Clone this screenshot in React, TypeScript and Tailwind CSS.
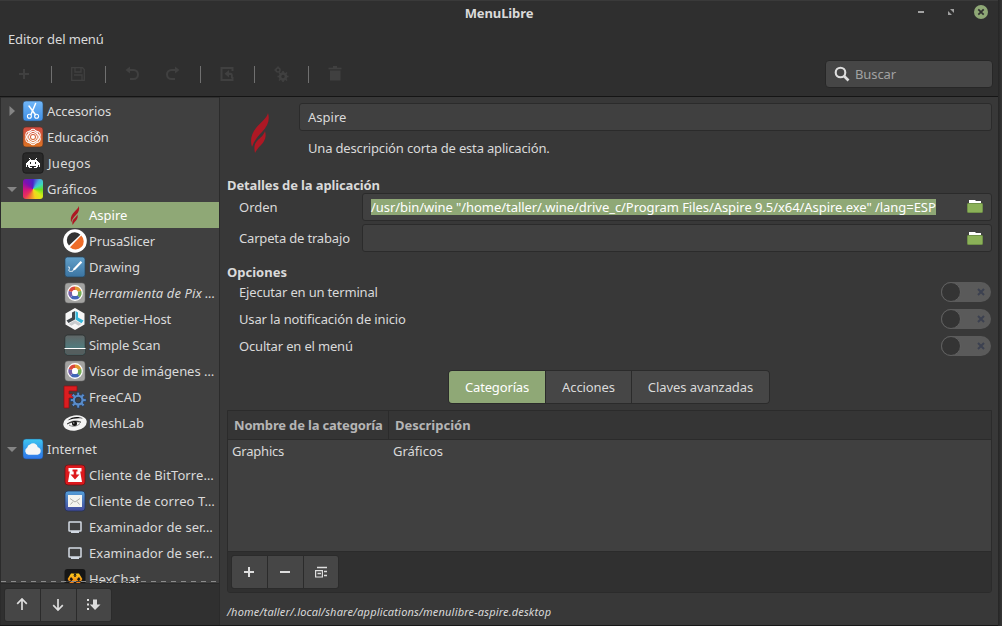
import type { ReactNode } from "react";

type IconName =
  | "scissors" | "atom" | "invader" | "spectrum" | "flame" | "prusa" | "drawing" | "pix"
  | "repetier" | "scan" | "freecad" | "meshlab" | "cloud" | "torrent" | "mail" | "server" | "hex";

const gearTeeth = [0, 45, 90, 135, 180, 225, 270, 315];

function Flame({ className }: { className: string }) {
  return (
    <svg className={className} viewBox="0 0 18 40">
      <path d="M17 0C16 5 11 8 5 15C0 21-1 28 1 34C3 28 7 23 11 19C17 13 19 7 17 0Z" fill="#ad1824" />
      <path d="M14 18C13 22 9 25 6 28C3 31 3 35 4 40C7 34 11 32 13 28C15 25 15 21 14 18Z" fill="#ad1824" />
    </svg>
  );
}

function Art({ name }: { name: IconName }) {
  switch (name) {
    case "scissors":
      return (
        <>
          <rect x="2" y="2" width="20" height="20" rx="3" fill="url(#blue)" stroke="#2d4a6a" strokeWidth=".6" />
          <path d="M14.6 4.5L10 15.5M8 7L14.5 15.8" stroke="#fff" strokeWidth="1.5" fill="none" strokeLinecap="round" />
          <circle cx="8.4" cy="17.3" r="2" fill="none" stroke="#fff" strokeWidth="1.1" />
          <circle cx="15.6" cy="17.3" r="2" fill="none" stroke="#fff" strokeWidth="1.1" />
        </>
      );
    case "atom":
      return (
        <>
          <rect x="2" y="2" width="20" height="20" rx="3" fill="url(#orange)" stroke="#5a3020" strokeWidth=".6" />
          <g fill="none" stroke="#fff" strokeWidth="1">
            <circle cx="12" cy="12" r="3.6" />
            <ellipse cx="12" cy="12" rx="7.8" ry="5.2" transform="rotate(30 12 12)" />
            <ellipse cx="12" cy="12" rx="7.8" ry="5.2" transform="rotate(90 12 12)" />
            <ellipse cx="12" cy="12" rx="7.8" ry="5.2" transform="rotate(150 12 12)" />
          </g>
          <circle cx="12" cy="12" r="2" fill="#fff" />
        </>
      );
    case "invader":
      return (
        <>
          <rect x="1.8" y="1.8" width="20.4" height="20.4" rx="3" fill="#292929" stroke="#181818" strokeWidth=".8" />
          <path d="M8 7h1v1h1v1h4V8h1V7h1v1h-1v1h1v1h1v1h1v1h1v4h-1v-2h-1v2h-1v1h-3v-1h2v-1H9v1h2v1H8v-1H7v-2H6v2H5v-4h1v-1h1v-1h1V9h1V8H8zM9 11v2h1v-2zM14 11v2h1v-2z" fill="#fff" fillRule="evenodd" />
        </>
      );
    case "spectrum":
      return (
        <foreignObject x="2" y="2" width="20" height="20">
          <div className="h-5 w-5 rounded-[3px] bg-[conic-gradient(#4a22c8,#4aa8e0_10%,#3ad8c0_17%,#6ae020_26%,#d8ea18_36%,#f5d020_46%,#f08030_55%,#e8305c_63%,#d01480_74%,#8010b0_86%,#4a22c8)]" />
        </foreignObject>
      );
    case "prusa":
      return (
        <>
          <circle cx="12" cy="12" r="11.8" fill="#fff" />
          <path d="M6 16.6A7.7 7.7 0 0 1 17.4 5.700Z" fill="#333" />
          <path d="M18.200 6.600A7.9 7.9 0 0 1 7 18.300Z" fill="#ee6c28" />
        </>
      );
    case "drawing":
      return (
        <>
          <rect x="2" y="2" width="20" height="20" rx="2.5" fill="url(#steel)" stroke="#27455c" strokeWidth=".7" />
          <path d="M10.500 13.500L17.600 6L19.200 7.600L12.300 14.800L9.500 16Z" fill="#fff" />
          <path d="M5 12.5C6.5 11 7 12.5 6 14.5S7.5 16.8 10 16" fill="none" stroke="#fff" strokeWidth=".9" />
        </>
      );
    case "pix":
      return (
        <>
          <rect x="2" y="2" width="20" height="20" rx="3" fill="#a3a3a1" stroke="#6e6e6e" strokeWidth=".5" />
          <circle cx="12" cy="12" r="7.9" fill="#fff" />
          <g fill="none" strokeWidth="3.6">
            <path d="M12 7.2A4.8 4.8 0 0 1 16.5 10.4" stroke="#e09a32" />
            <path d="M16.5 10.4A4.8 4.8 0 0 1 15.4 15.4" stroke="#74ad54" />
            <path d="M15.4 15.4A4.8 4.8 0 0 1 8.6 15.4" stroke="#4266b8" />
            <path d="M8.6 15.4A4.8 4.8 0 0 1 7.4 10.4" stroke="#7660a8" />
            <path d="M7.4 10.4A4.8 4.8 0 0 1 12 7.2" stroke="#d9483c" />
          </g>
          <circle cx="12" cy="12" r="3" fill="#fff" />
        </>
      );
    case "repetier":
      return (
        <>
          <path d="M12 1L21.500 6.500V17.500L12 23L2.500 17.500V6.500Z" fill="#f6f6f6" />
          <path d="M9 5.500L12 4V12.500L5.500 16L3.500 13.500L9 10.500Z" fill="#40464b" />
          <path d="M12.500 4L15 5.500V10.500L20.500 13.500L18.500 16.200L12.500 12.500Z" fill="#36b5d8" />
          <path d="M5.500 17L12 13.200L18.500 17L15.500 18.700L12 16.500L8.500 18.700Z" fill="#c9cccf" />
        </>
      );
    case "scan":
      return (
        <>
          <rect x="1.8" y="2" width="20.4" height="20" rx="2.8" fill="url(#scanner)" stroke="#2a3030" strokeWidth=".8" />
          <path d="M2.200 15.5H21.800V19A3 3 0 0 1 19 21.600H5A3 3 0 0 1 2.200 19Z" fill="#555e5e" />
          <path d="M1.5 15.5H22.5" stroke="#fff" strokeWidth="1" />
        </>
      );
    case "freecad":
      return (
        <>
          <path d="M1 1H14V6H6V9H11V13H6V23H1Z" fill="#db1d20" stroke="#8b1014" strokeWidth=".7" />
          <g fill="#5a8cca" stroke="#18355d" strokeWidth=".6">
            {gearTeeth.map((angle) => (
              <rect key={angle} x="13.9" y="7.2" width="2.6" height="4.5" transform={`rotate(${angle} 15.2 15.1)`} />
            ))}
          </g>
          <circle cx="15.2" cy="15.1" r="4.2" fill="none" stroke="#5a8cca" strokeWidth="2.4" />
          <circle cx="15.2" cy="15.1" r="2.9" fill="#404040" stroke="#18355d" strokeWidth=".6" />
        </>
      );
    case "meshlab":
      return (
        <>
          <ellipse cx="12" cy="12" rx="11.8" ry="7.6" fill="#f4f4f4" transform="rotate(-8 12 12)" />
          <path d="M4.500 9.500C9 5.500 15 5 20 7.500C14.500 6.600 10 7.500 4.500 9.500Z" fill="#111" />
          <path d="M4 13C9 9.300 13.500 9.200 18 11.200C13.500 10.500 9 10.800 4 13Z" fill="#111" stroke="#111" strokeWidth=".5" />
          <path d="M6 14C9.500 16.200 14 15.500 17 12.500" fill="none" stroke="#666" strokeWidth=".8" />
          <circle cx="11.500" cy="12.500" r="2.500" fill="#111" />
          <circle cx="10.800" cy="11.900" r=".6" fill="#fff" />
        </>
      );
    case "cloud":
      return (
        <>
          <rect x="2" y="2" width="20" height="20" rx="3" fill="url(#sky)" stroke="#225080" strokeWidth=".5" />
          <path d="M7.500 17.800A3.900 3.900 0 0 1 6.300 10.500A3.600 3.600 0 0 1 9 7.600A4.600 4.600 0 0 1 16.800 10.200A3.900 3.900 0 0 1 16.500 17.800Z" fill="#f5f5f5" />
        </>
      );
    case "torrent":
      return (
        <>
          <rect x="2" y="2" width="20" height="20" rx="3" fill="#dd191d" stroke="#6c1214" strokeWidth=".8" />
          <path d="M5.500 5H18.500V8.500H17.200L19 19H5L6.800 8.500H5.500Z" fill="#fff" />
          <path d="M9.500 6.500H14.500V8.500H13.300V11.500H16.500L12 16.500L7.500 11.500H10.700V8.500H9.500Z" fill="#dd191d" />
        </>
      );
    case "mail":
      return (
        <>
          <rect x="2" y="2" width="20" height="20" rx="3" fill="url(#post)" stroke="#233258" strokeWidth=".8" />
          <rect x="5" y="6" width="14" height="12" fill="#f4f4f0" />
          <path d="M7 9.500L12 13L17 9.500M7.500 15.500L10 12.500M16.500 15.500L14 12.500" fill="none" stroke="#b0b0ab" strokeWidth="1" />
        </>
      );
    case "server":
      return (
        <>
          <rect x="6" y="7" width="12" height="9" rx=".5" fill="none" stroke="#d3dae3" strokeWidth="1.500" />
          <path d="M8 17H16" stroke="#d3dae3" strokeWidth="2" />
        </>
      );
    case "hex":
      return (
        <>
          <rect x="1.5" y="2" width="21" height="20" rx="3" fill="#161616" />
          <path d="M8.500 7.500H15.500L18.300 12L15.500 17H8.500L5.700 12Z" fill="none" stroke="url(#honey)" strokeWidth="1.800" />
          <path d="M8 8L16 16.500M16 8L8 16.500" stroke="url(#honey)" strokeWidth="2.600" />
          <path d="M10.500 6.500H13.500L12 9.500Z" fill="#161616" />
        </>
      );
    default:
      return null;
  }
}

type Row = { label: string; icon: IconName; level: 0 | 1; arrow?: "right" | "down"; selected?: boolean; text: string };

const rows: Row[] = [
  { label: "Accesorios", icon: "scissors", level: 0, arrow: "right", text: "tracking-[-0.1px]" },
  { label: "Educación", icon: "atom", level: 0, text: "tracking-[-0.05px]" },
  { label: "Juegos", icon: "invader", level: 0, text: "pl-px tracking-[0.3px]" },
  { label: "Gráficos", icon: "spectrum", level: 0, arrow: "down", text: "" },
  { label: "Aspire", icon: "flame", level: 1, selected: true, text: "text-white" },
  { label: "PrusaSlicer", icon: "prusa", level: 1, text: "tracking-[-0.15px]" },
  { label: "Drawing", icon: "drawing", level: 1, text: "tracking-[-0.1px]" },
  { label: "Herramienta de Pix …", icon: "pix", level: 1, text: "italic tracking-[0.1px]" },
  { label: "Repetier-Host", icon: "repetier", level: 1, text: "tracking-[-0.15px]" },
  { label: "Simple Scan", icon: "scan", level: 1, text: "tracking-[-0.2px]" },
  { label: "Visor de imágenes …", icon: "pix", level: 1, text: "tracking-[-0.05px]" },
  { label: "FreeCAD", icon: "freecad", level: 1, text: "" },
  { label: "MeshLab", icon: "meshlab", level: 1, text: "tracking-[-0.1px]" },
  { label: "Internet", icon: "cloud", level: 0, arrow: "down", text: "" },
  { label: "Cliente de BitTorre…", icon: "torrent", level: 1, text: "tracking-[0.08px]" },
  { label: "Cliente de correo T…", icon: "mail", level: 1, text: "tracking-[0.08px]" },
  { label: "Examinador de ser…", icon: "server", level: 1, text: "tracking-[0.06px]" },
  { label: "Examinador de ser…", icon: "server", level: 1, text: "tracking-[0.06px]" },
  { label: "HexChat", icon: "hex", level: 1, text: "tracking-[-0.1px]" },
];

function TreeRow({ row }: { row: Row }) {
  return (
    <div className={`flex h-[26px] shrink-0 items-center ${row.selected ? "bg-[#8fa876]" : ""}`}>
      <span className={`flex shrink-0 justify-center pl-px ${row.level ? "w-[62px]" : "w-5"}`}>
        {row.arrow && (
          <svg className="h-3 w-3" viewBox="0 0 12 12" fill="#858585">
            {row.arrow === "right" ? <path d="M3.500 1L9 6L3.500 11Z" /> : <path d="M1 4H11L6 9Z" />}
          </svg>
        )}
      </span>
      {row.icon === "flame" ? (
        <span className="flex w-6 shrink-0 justify-center"><Flame className="h-[19px] w-[10px]" /></span>
      ) : (
        <svg className="h-6 w-6 shrink-0" viewBox="0 0 24 24"><Art name={row.icon} /></svg>
      )}
      <span className={`ml-[2px] whitespace-nowrap ${row.text}`}>{row.label}</span>
    </div>
  );
}

function Tool({ children, className }: { children: ReactNode; className: string }) {
  return (
    <span className={`flex h-5 shrink-0 items-center justify-center ${className}`}>
      <svg className="h-4 w-4" viewBox="0 0 16 16" fill="none" stroke="#404040" strokeWidth="2">{children}</svg>
    </span>
  );
}

function Separator() {
  return <span className="h-[17px] w-px shrink-0 bg-[#707070]" />;
}

function IconButton({ children }: { children: ReactNode }) {
  return (
    <button className="flex w-[35px] shrink-0 items-center justify-center bg-[#464646] pr-px">
      <svg className="h-4 w-4 shrink-0" viewBox="0 0 16 16" fill="none" stroke="#dedede" strokeWidth="2">{children}</svg>
    </button>
  );
}

function ButtonGroup({ children }: { children: ReactNode }) {
  return <div className="flex h-[34px] w-[108px] gap-px overflow-hidden rounded-[3px] border border-[#2b2b2b] bg-[#2b2b2b]">{children}</div>;
}

function Folder() {
  return (
    <svg className="h-4 w-4 shrink-0" viewBox="0 0 16 16">
      <path d="M2 1H8L9 2H14V7H2Z" fill="#fff" />
      <rect x=".5" y="4.5" width="15" height="9" rx=".7" fill="#8bb158" stroke="#709248" />
    </svg>
  );
}

function OptionRow({ label, tracking }: { label: string; tracking: string }) {
  return (
    <div className="flex h-[27px] items-center justify-between">
      <span className={tracking}>{label}</span>
      <span className="flex h-5 w-[50px] items-center justify-between rounded-full bg-[#5a5a5a] pr-[6px]">
        <span className="h-5 w-5 rounded-full border border-[#606060] bg-[#343434]" />
        <svg className="h-2 w-2" viewBox="0 0 8 8" stroke="#3c4150" strokeWidth="2"><path d="M1 1L7 7M7 1L1 7" /></svg>
      </span>
    </div>
  );
}

export default function App() {
  return (
    <div className="flex h-[626px] w-[1002px] overflow-hidden bg-[#2c2c2c] font-['Noto_Sans',sans-serif] text-[13px] leading-5 text-[#dadada]">
      <svg className="absolute h-0 w-0">
        <defs>
          <linearGradient id="blue" x2="0" y2="1"><stop stopColor="#72b7f8" /><stop offset="1" stopColor="#3e8ee6" /></linearGradient>
          <linearGradient id="orange" x2="0" y2="1"><stop stopColor="#d04b43" /><stop offset="1" stopColor="#dc7424" /></linearGradient>
          <linearGradient id="steel" x2="0" y2="1"><stop stopColor="#62a0c9" /><stop offset="1" stopColor="#3b74a2" /></linearGradient>
          <linearGradient id="scanner" x2="0" y2="1"><stop stopColor="#606565" /><stop offset=".65" stopColor="#507b7e" /></linearGradient>
          <linearGradient id="sky" x2="0" y2="1"><stop stopColor="#3ec5f0" /><stop offset="1" stopColor="#2d73e8" /></linearGradient>
          <linearGradient id="post" x2="0" y2="1"><stop stopColor="#54a0da" /><stop offset="1" stopColor="#434a9b" /></linearGradient>
          <linearGradient id="honey" gradientUnits="userSpaceOnUse" x1="0" y1="6" x2="0" y2="18"><stop stopColor="#ffd21c" /><stop offset="1" stopColor="#ee6a12" /></linearGradient>
        </defs>
      </svg>
      <div className="flex w-[998px] flex-col border-b border-[#171717]">
        <header className="flex h-[97px] shrink-0 flex-col border-t border-b border-t-[#3a3a3a] border-b-[#151515] bg-[#2f2f2f]">
          <div className="flex h-6 items-center">
            <span className="w-[420px]" />
            <h1 className="w-[158px] text-center font-bold tracking-[-0.1px]">MenuLibre</h1>
            <div className="flex flex-1 items-center justify-end pr-[10px] pb-[2px]">
              <span className="mr-[24px] h-[2px] w-[6px] bg-[#a3a3a3]" />
              <svg className="mr-[20px] h-[6px] w-[6px]" viewBox="0 0 6 6" fill="#a0a0a0"><path d="M2 0H6V4ZM0 2V6H4Z" /></svg>
              <svg className="h-[14px] w-[14px]" viewBox="0 0 14 14"><circle cx="7" cy="7" r="7" fill="#8fa876" /><path d="M4.3 4.3L9.7 9.7M9.7 4.3L4.3 9.7" stroke="#303030" strokeWidth="1.7" /></svg>
            </div>
          </div>
          <div className="flex h-[27px] items-center pl-2"><span className="tracking-[-0.12px]">Editor del menú</span></div>
          <div className="flex h-[44px] items-center">
            <Tool className="ml-[14px] mr-[17px] w-5"><path d="M8 3V13M3 8H13" /></Tool>
            <Separator />
            <Tool className="mr-[17px] ml-[15px] w-[21px]"><path d="M1.700 1.700H12.500L14.3 3.500V14.3H1.700ZM4 9H12V14M5 2V6H11V2" strokeWidth="1.3" /></Tool>
            <Separator />
            <Tool className="mr-px ml-[16px] w-5"><path d="M4 4H9.5A4 4 0 0 1 9.5 13H6" /><path d="M6 .5V7.5L1.5 4Z" fill="#404040" stroke="none" /></Tool>
            <Tool className="ml-[20px] mr-[17px] w-5"><path d="M12 4H6.5A4 4 0 0 0 6.5 13H10" /><path d="M10 .5V7.5L14.5 4Z" fill="#404040" stroke="none" /></Tool>
            <Separator />
            <Tool className="mr-[17px] ml-[15px] w-[21px]"><path d="M13.5 5V2H2.5V14H13.5V11" /><path d="M5.500 7.800L10 4V6.800H11.500Q13.800 6.800 13.800 9V12H12V9H10V11.500Z" fill="#404040" stroke="none" /></Tool>
            <Separator />
            <Tool className="mx-[16px] w-[21px]"><circle cx="4" cy="4" r="2" strokeWidth="1.5" /><circle cx="9" cy="10.5" r="3" strokeWidth="2.6" /><path d="M9 5V7M9 14V16M3.5 10.5H5.5M12.5 10.5H14.5M5 6.5L7 8.5M11 12.5L13 14.5M5 14.5L7 12.5M11 8.5L13 6.5M4 .5V2M.5 4H2" strokeWidth="1.7" /></Tool>
            <Separator />
            <Tool className="ml-[15px] w-[21px]"><path d="M1.5 2.5H14.5" strokeWidth="1.7" /><path d="M6 0H10V2H6ZM3 4.5H13.5V14.5H3Z" fill="#404040" stroke="none" /></Tool>
            <div className="ml-auto mr-[5px] flex h-7 w-[168px] items-center rounded-[4px] border border-[#272727] bg-[#464646] pl-2">
              <svg className="h-4 w-4" viewBox="0 0 16 16" fill="none" stroke="#dedede" strokeWidth="2.1"><circle cx="6.5" cy="6.5" r="4.8" /><path d="M10 10L14.5 14.5" strokeWidth="2.6" /></svg>
              <span className="ml-[5px] tracking-[-0.1px] text-[#a2a2a2]">Buscar</span>
            </div>
          </div>
        </header>

        <main className="flex h-[528px]">
          <aside className="flex w-[220px] shrink-0 flex-col border-r border-l border-[#2b2b2b]">
            <div className="relative flex h-[486px] flex-col overflow-hidden border-t border-[#303030] bg-[#404040]">
              {rows.map((row, index) => <TreeRow key={index} row={row} />)}
              <div className="absolute bottom-px left-0 h-px w-full bg-[repeating-linear-gradient(90deg,#8b8b8b_0px,#8b8b8b_5px,#404040_5px,#404040_10px)]" />
            </div>
            <div className="flex flex-1 items-center border-t border-[#292929] bg-[#303030] pl-[3px]">
              <ButtonGroup>
                <IconButton><path d="M8 13V2M3.2 6.8L8 2L12.8 6.8" strokeWidth="1.7" /></IconButton>
                <IconButton><path d="M8 2V13M3.2 8.2L8 13L12.8 8.2" strokeWidth="1.7" /></IconButton>
                <IconButton><path d="M1 3H3M1 7.5H3M1 12H3" /><path d="M7 2.5H11V7.5H14.5L9 13L3.8 7.5H7Z" fill="#dedede" stroke="none" /></IconButton>
              </ButtonGroup>
            </div>
          </aside>

          <section className="flex flex-1 flex-col bg-[#383838] pl-[7px] pr-[6px] pt-[6px]">
            <div className="flex h-[62px]">
              <div className="flex w-[72px] shrink-0 justify-center pt-[10px] pr-[6px]"><Flame className="h-10 w-[18px]" /></div>
              <div className="flex flex-1 flex-col">
                <div className="flex h-7 items-center rounded-[3px] border border-[#2b2b2b] bg-[#404040] pl-2">Aspire</div>
                <div className="mt-[7px] pl-[9px] tracking-[-0.17px]">Una descripción corta de esta aplicación.</div>
              </div>
            </div>
            <h2 className="mt-[10px] h-[18px] font-bold leading-5 tracking-[-0.12px]">Detalles de la aplicación</h2>
            <div className="flex h-7 items-center">
              <span className="w-[135px] pl-3">Orden</span>
              <div className="flex h-7 flex-1 items-center justify-between rounded-[3px] border border-[#2b2b2b] bg-[#404040] px-2">
                <span className="flex h-4 items-center bg-[#8fa876] whitespace-nowrap tracking-[-0.056px] text-white">/usr/bin/wine "/home/taller/.wine/drive_c/Program Files/Aspire 9.5/x64/Aspire.exe" /lang=ESP</span>
                <Folder />
              </div>
            </div>
            <div className="mt-[3px] flex h-7 items-center">
              <span className="w-[135px] pl-3 tracking-[-0.17px]">Carpeta de trabajo</span>
              <div className="flex h-7 flex-1 items-center justify-end rounded-[3px] border border-[#2b2b2b] bg-[#404040] px-2"><span className="mt-px flex"><Folder /></span></div>
            </div>
            <h2 className="mt-[10px] h-4 font-bold leading-5">Opciones</h2>
            <div className="flex flex-col pl-3 pr-px">
              <OptionRow label="Ejecutar en un terminal" tracking="tracking-[-0.17px]" />
              <OptionRow label="Usar la notificación de inicio" tracking="tracking-[-0.14px]" />
              <OptionRow label="Ocultar en el menú" tracking="tracking-[-0.17px]" />
            </div>
            <div className="mt-[11px] mr-px flex h-[34px] w-[322px] gap-px self-center overflow-hidden rounded-[4px] border border-[#2b2b2b] bg-[#2b2b2b]">
              <button className="w-[96px] bg-[#8fa876] tracking-[-0.15px] text-white">Categorías</button>
              <button className="w-[85px] bg-[#464646] tracking-[-0.1px]">Acciones</button>
              <button className="flex-1 bg-[#464646] tracking-[-0.08px]">Claves avanzadas</button>
            </div>
            <div className="mt-[6px] flex h-[183px] flex-col overflow-hidden rounded-b-[3px] border border-[#2b2b2b]">
              <div className="flex h-[29px] items-center border-b border-[#2b2b2b] bg-[#353535] font-bold text-[#b5b5b5]">
                <span className="flex h-full w-[161px] items-center border-r border-[#2b2b2b] pl-[6px] whitespace-nowrap tracking-[-0.17px]">Nombre de la categoría</span>
                <span className="pl-[6px]">Descripción</span>
              </div>
              <div className="flex h-[111px] bg-[#404040] pt-px">
                <span className="w-[161px] pl-1 tracking-[-0.2px]">Graphics</span>
                <span className="pl-1">Gráficos</span>
              </div>
              <div className="flex flex-1 border-t border-[#2b2b2b] bg-[#303030] pl-[3px] pt-[3px]">
                <ButtonGroup>
                  <IconButton><path d="M8 3V13M3 8H13" /></IconButton>
                  <IconButton><path d="M3 8H13" /></IconButton>
                  <IconButton><path d="M4 3.5H14M11 7.5H14M11 11.5H14M4.5 9.5H8" strokeWidth="1.7" /><path d="M2.6 6.6H9.4V13H2.6Z" strokeWidth="1.2" /></IconButton>
                </ButtonGroup>
              </div>
            </div>
            <div className="mt-[9px] text-[11px] tracking-[0.175px] italic">/home/taller/.local/share/applications/menulibre-aspire.desktop</div>
          </section>
        </main>
      </div>
      <div className="w-1 bg-linear-to-r from-[#252525] to-[#363636]" />
    </div>
  );
}
